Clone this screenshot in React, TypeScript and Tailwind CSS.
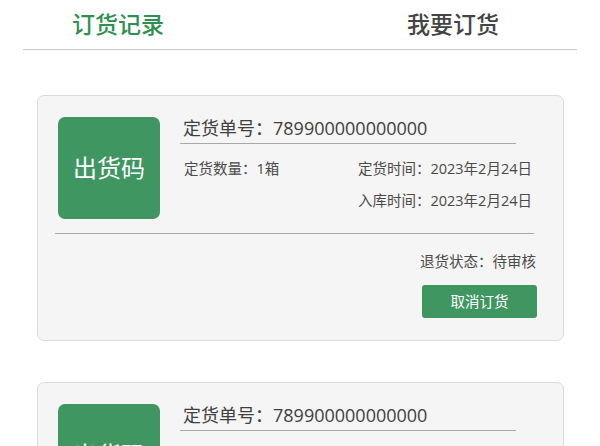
import React from 'react';

const font = { fontFamily: '"Open Sans", "Noto Sans CJK SC", sans-serif' };

type Order = {
  no: string;
  qty: string;
  orderDate: string;
  inDate: string;
  status: string;
};

const orders: Order[] = [
  { no: '789900000000000', qty: '1箱', orderDate: '2023年2月24日', inDate: '2023年2月24日', status: '待审核' },
  { no: '789900000000000', qty: '1箱', orderDate: '2023年2月24日', inDate: '2023年2月24日', status: '待审核' },
];

function OrderCard({ order }: { order: Order }) {
  return (
    <div className="ml-[37px] mr-[36px] flex flex-col rounded-[7px] border border-[#dcdcdc] bg-[#f5f5f5] pt-[21px] pb-[22px]">
      {/* 上半部分 */}
      <div className="flex h-[102px]">
        <div className="ml-[20px] flex h-[102px] w-[102px] shrink-0 items-center justify-center rounded-[7px] bg-[#3f9660] text-[24px] text-white">
          出货码
        </div>
        <div className="ml-[20px] mr-[31px] flex flex-1 flex-col">
          <div className="-mt-[3px] mr-[16px] border-b border-[#a8a8a8] pl-[3px] text-[18px] leading-[29px] text-[#3f3f3f]">
            定货单号：{order.no}
          </div>
          <div className="mt-[15px] flex justify-between text-[14.5px] leading-[20px] text-[#4a4a4a]">
            <span className="pl-[4px]">定货数量：{order.qty}</span>
            <span>定货时间：{order.orderDate}</span>
          </div>
          <div className="mt-[12px] flex justify-end text-[14.5px] leading-[20px] text-[#4a4a4a]">
            <span>入库时间：{order.inDate}</span>
          </div>
        </div>
      </div>

      {/* 分割线 */}
      <div className="mt-[14px] ml-[17px] mr-[29px] border-t border-[#a8a8a8]" />

      {/* 状态 + 按钮 */}
      <div className="mt-[18px] mr-[27px] text-right text-[14.5px] leading-[20px] text-[#4a4a4a]">
        退货状态：{order.status}
      </div>
      <button className="mt-[13px] mr-[26px] flex h-[33px] w-[115px] items-center justify-center self-end rounded-[3px] bg-[#3f9660] text-[14.5px] text-white">
        取消订货
      </button>
    </div>
  );
}

export default function App() {
  return (
    <div className="h-[446px] w-[600px] overflow-hidden bg-white" style={font}>
      {/* Tabs */}
      <div className="mx-[23px] flex h-[50px] items-center justify-between border-b border-[#c8c8c8] pl-[49px] pr-[78px] pb-[1px]">
        <span className="text-[23px] font-medium text-[#2f8f52]">订货记录</span>
        <span className="text-[23px] font-medium text-[#444]">我要订货</span>
      </div>

      <div className="mt-[45px] flex flex-col gap-[41px]">
        {orders.map((o, i) => (
          <OrderCard key={i} order={o} />
        ))}
      </div>
    </div>
  );
}
